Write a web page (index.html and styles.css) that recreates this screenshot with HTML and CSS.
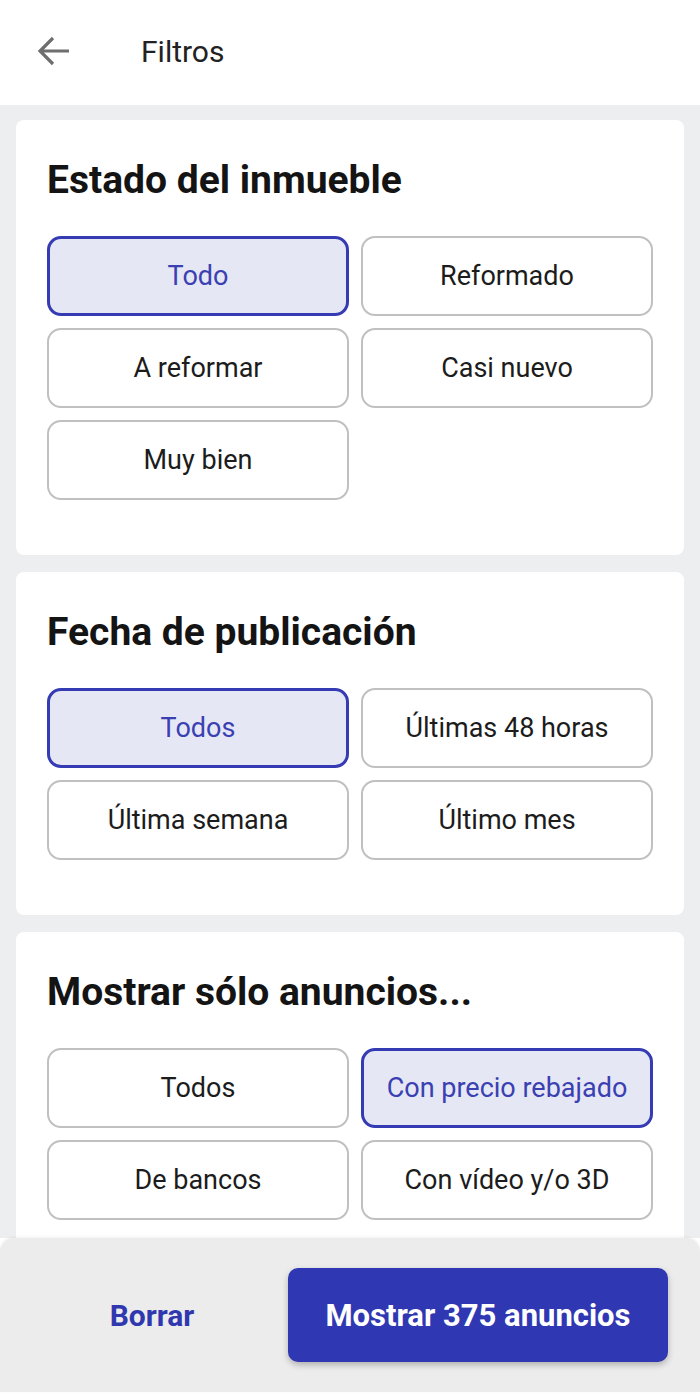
FILE: index.html
```html
<!DOCTYPE html>
<html lang="es">
<head>
    <meta charset="UTF-8">
    <meta name="viewport" content="width=device-width,initial-scale=1">
    <title>Filtros</title>
    <link rel="stylesheet" href="styles.css">
</head>
<body>
    <header class="topbar">
        <a class="back" href="javascript:;">
            <svg width="32" height="30" viewBox="0 0 32 30">
                <path d="M31 15H3M15 2L2 15l13 13" fill="none" stroke="#6e6e6e" stroke-width="3.2" stroke-linejoin="miter"/>
            </svg>
        </a>
        <h1 class="title">Filtros</h1>
    </header>

    <main class="filters">
        <section class="card">
            <h2>Estado del inmueble</h2>
            <div class="options">
                <button class="opt selected">Todo</button>
                <button class="opt">Reformado</button>
                <button class="opt">A reformar</button>
                <button class="opt">Casi nuevo</button>
                <button class="opt">Muy bien</button>
            </div>
        </section>
        <section class="card">
            <h2>Fecha de publicación</h2>
            <div class="options">
                <button class="opt selected">Todos</button>
                <button class="opt">Últimas 48 horas</button>
                <button class="opt">Última semana</button>
                <button class="opt">Último mes</button>
            </div>
        </section>
        <section class="card">
            <h2>Mostrar sólo anuncios...</h2>
            <div class="options">
                <button class="opt">Todos</button>
                <button class="opt selected">Con precio rebajado</button>
                <button class="opt">De bancos</button>
                <button class="opt">Con vídeo y/o 3D</button>
            </div>
        </section>
    </main>

    <footer class="actions">
        <div class="bar">
            <a class="clear" href="javascript:;">Borrar</a>
            <button class="show">Mostrar 375 anuncios</button>
        </div>
    </footer>
</body>
</html>
```

FILE: styles.css
```css
/* reset */
body{
    margin: 0;
    background: #eceef0;
    font-family: Roboto, "Liberation Sans", Arial, sans-serif;
    color: #1c1c1c;
}
button{
    font-family: inherit;
    -webkit-appearance: none;
    cursor: pointer;
}
a{
    text-decoration: none;
}
/* cabecera */
.topbar{
    height: 105px;
    background: #fff;
    display: flex;
    align-items: center;
    padding-left: 38px;
}
.back{
    display: flex;
    width: 32px;
    height: 30px;
    margin-top: -4px;
}
.title{
    margin: -3px 0 0 71px;
    font-size: 30px;
    font-weight: 400;
    color: #222;
}
/* tarjetas */
.filters{
    padding: 15px 16px 200px;
    display: flex;
    flex-direction: column;
    gap: 17px;
}
.card{
    background: #fff;
    border-radius: 8px;
    padding: 37px 31px 55px;
}
.card h2{
    margin: 0 0 33px;
    font-size: 39px;
    line-height: 46px;
    font-weight: 700;
    color: #141414;
}
.options{
    display: grid;
    grid-template-columns: 302px 292px;
    gap: 12px;
}
.opt{
    height: 80px;
    border: 2px solid #c0c0c0;
    border-radius: 14px;
    background: #fff;
    font-size: 27px;
    color: #1c1c1c;
    padding: 0;
}
.opt.selected{
    background: #e5e7f5;
    border: 3px solid #353bb2;
    color: #3a40b2;
}
/* barra inferior */
.actions{
    position: fixed;
    left: 0;
    right: 0;
    bottom: 0;
    background: #fff;
    padding-bottom: 8px;
}
.bar{
    height: 154px;
    background: #ececec;
    border-radius: 14px 14px 0 0;
    box-shadow: 0 -1px 3px rgba(0,0,0,.06);
    display: flex;
    align-items: center;
    padding: 0 32px 0 16px;
}
.clear{
    flex: 1;
    text-align: center;
    font-size: 30px;
    font-weight: 700;
    color: #3038b0;
}
.show{
    width: 380px;
    height: 94px;
    border: 0;
    border-radius: 10px;
    background: #2f37b3;
    color: #fff;
    font-size: 31px;
    font-weight: 700;
    box-shadow: 0 3px 6px rgba(0,0,0,.25);
}
```
